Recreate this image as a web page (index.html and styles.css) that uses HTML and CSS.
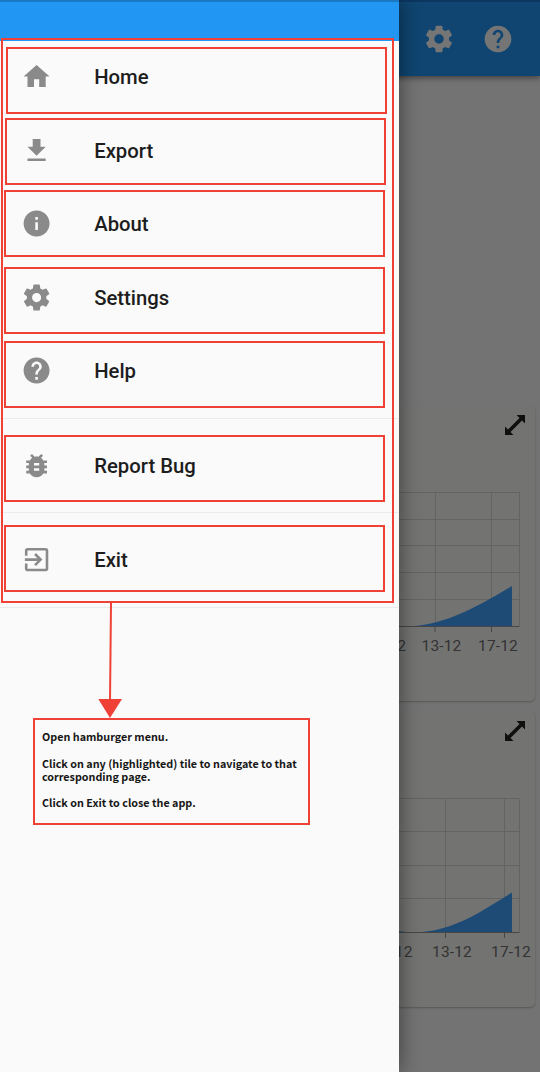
FILE: index.html
```
<!DOCTYPE html>
<html lang="en">
<head>
<meta charset="utf-8">
<title>Navigation drawer</title>
<link rel="stylesheet" href="styles.css">
</head>
<body>
<svg class="defs" width="0" height="0">
  <symbol id="home" viewBox="0 0 24 24"><path d="M10 20v-6h4v6h5v-8h3L12 3 2 12h3v8z"/></symbol>
  <symbol id="download" viewBox="0 0 24 24"><path d="M19 9h-4V3H9v6H5l7 7 7-7zM5 18v2h14v-2H5z"/></symbol>
  <symbol id="info" viewBox="0 0 24 24"><path d="M12 2C6.48 2 2 6.48 2 12s4.480 10 10 10 10-4.480 10-10S17.520 2 12 2zm1 15h-2v-6h2v6zm0-8h-2V7h2v2z"/></symbol>
  <symbol id="gear" viewBox="0 0 24 24"><path d="M19.430 12.980c.04-.32.07-.64.07-.98s-.03-.66-.07-.98l2.110-1.650c.19-.15.24-.42.12-.64l-2-3.460c-.12-.22-.39-.3-.61-.22l-2.490 1c-.52-.4-1.080-.73-1.690-.98l-.38-2.650C14.460 2.180 14.250 2 14 2h-4c-.25 0-.46.18-.49.42l-.38 2.650c-.61.25-1.170.59-1.690.98l-2.490-1c-.23-.09-.49 0-.61.22l-2 3.460c-.13.22-.07.49.12.64l2.110 1.650c-.04.32-.07.65-.07.98s.03.66.07.98l-2.110 1.650c-.19.15-.24.42-.12.64l2 3.460c.12.22.39.3.61.22l2.490-1c.52.4 1.080.73 1.690.98l.38 2.650c.03.24.24.42.49.42h4c.25 0 .46-.18.49-.42l.38-2.650c.61-.25 1.170-.59 1.690-.98l2.490 1c.23.09.49 0 .61-.22l2-3.460c.12-.22.07-.49-.12-.64l-2.110-1.650zM12 15.500c-1.930 0-3.500-1.570-3.500-3.500s1.570-3.500 3.500-3.500 3.500 1.570 3.500 3.500-1.570 3.500-3.500 3.500z"/></symbol>
  <symbol id="help" viewBox="0 0 24 24"><path d="M12 2C6.480 2 2 6.480 2 12s4.480 10 10 10 10-4.480 10-10S17.520 2 12 2zm1 17h-2v-2h2v2zm2.070-7.750l-.9.920C13.450 12.900 13 13.500 13 15h-2v-.5c0-1.100.45-2.100 1.170-2.830l1.240-1.260c.37-.36.59-.86.59-1.410 0-1.100-.9-2-2-2s-2 .9-2 2H8c0-2.210 1.790-4 4-4s4 1.790 4 4c0 .88-.36 1.680-.93 2.250z"/></symbol>
  <symbol id="bug" viewBox="0 0 24 24"><path d="M20 8h-2.810c-.45-.78-1.070-1.450-1.820-1.960L17 4.410 15.590 3l-2.170 2.170C12.960 5.060 12.490 5 12 5s-.96.06-1.410.17L8.410 3 7 4.410l1.620 1.630C7.880 6.550 7.260 7.220 6.810 8H4v2h2.090c-.05.33-.09.66-.09 1v1H4v2h2v1c0 .34.04.67.09 1H4v2h2.810c1.040 1.790 2.970 3 5.190 3s4.150-1.210 5.190-3H20v-2h-2.090c.05-.33.09-.66.09-1v-1h2v-2h-2v-1c0-.34-.04-.67-.09-1H20V8zm-6 8h-4v-2h4v2zm0-4h-4v-2h4v2z"/></symbol>
  <symbol id="exit" viewBox="0 0 24 24"><path d="M10.090 15.590L11.500 17l5-5-5-5-1.410 1.410L12.670 11H3v2h9.670l-2.580 2.590zM19 3H5c-1.110 0-2 .9-2 2v4h2V5h14v14H5v-4H3v4c0 1.100.89 2 2 2h14c1.100 0 2-.9 2-2V5c0-1.100-.9-2-2-2z"/></symbol>
  <symbol id="expand" viewBox="0 0 20 20"><path d="M11.500 0H20v8.500l-3-3L5.500 17l3 3H0v-8.500l3 3L14.500 3z"/></symbol>
</svg>

<div class="screen">
  <div class="page">
    <header class="appbar">
      <svg class="bar-icon"><use href="#gear"/></svg>
      <svg class="bar-icon"><use href="#help"/></svg>
    </header>
    <main class="cards">
      <section class="card">
        <svg class="expand"><use href="#expand"/></svg>
        <svg class="chart" viewBox="380 490 155 170">
          <path class="grid" d="M380 492.500H519.500M380 519.500H519.500M380 545.500H519.500M380 572.500H519.500M380 599.500H519.500M435.500 492V626M491.500 492V626M519.500 492V626"/>
          <path class="area" d="M415 626C449 622 473 609 512 586V626Z"/>
          <path class="axis" d="M380 626.500H519.500M435 626V632M491.500 626V632"/>
          <text x="390.500" y="651" text-anchor="middle">9-12</text>
          <text x="441.500" y="651" text-anchor="middle">13-12</text>
          <text x="498" y="651" text-anchor="middle">17-12</text>
        </svg>
      </section>
      <section class="card">
        <svg class="expand"><use href="#expand"/></svg>
        <svg class="chart" viewBox="380 796 155 170">
          <path class="grid" d="M380 798.500H519.500M380 831.500H519.500M380 865.500H519.500M380 898.500H519.500M445.500 799V932M504.500 799V932M519.500 799V932"/>
          <path class="area" d="M422 932C454 929 476 915 512 892.500V932ZM380 929L407 932H380Z"/>
          <path class="axis" d="M380 932.500H519.500M445.500 932V938M504.500 932V938"/>
          <text x="397" y="957" text-anchor="middle">9-12</text>
          <text x="452" y="957" text-anchor="middle">13-12</text>
          <text x="511" y="957" text-anchor="middle">17-12</text>
        </svg>
      </section>
    </main>
  </div>
  <div class="scrim"></div>

  <nav class="drawer">
    <div class="drawer-head"></div>
    <a class="tile"><svg><use href="#home"/></svg><span>Home</span></a>
    <a class="tile"><svg><use href="#download"/></svg><span>Export</span></a>
    <a class="tile"><svg><use href="#info"/></svg><span>About</span></a>
    <a class="tile"><svg><use href="#gear"/></svg><span>Settings</span></a>
    <a class="tile"><svg><use href="#help"/></svg><span>Help</span></a>
    <div class="divider"></div>
    <a class="tile"><svg><use href="#bug"/></svg><span>Report Bug</span></a>
    <div class="divider"></div>
    <a class="tile"><svg><use href="#exit"/></svg><span>Exit</span></a>
    <div class="divider"></div>
  </nav>

  <!-- Annotation marks over the drawer -->
  <div class="mark mark-all"></div>
  <div class="mark mark-home"></div>
  <div class="mark mark-export"></div>
  <div class="mark mark-about"></div>
  <div class="mark mark-settings"></div>
  <div class="mark mark-help"></div>
  <div class="mark mark-bug"></div>
  <div class="mark mark-exit"></div>
  <svg class="arrow" viewBox="0 0 24 116"><path d="M12 0h2l-1 98h-2z"/><path d="M.3 96h23.700L12 115z"/></svg>
  <div class="mark note">
    <p>Open hamburger menu.</p>
    <p>Click on any (highlighted) tile to navigate to that<br>corresponding page.</p>
    <p>Click on Exit to close the app.</p>
  </div>
</div>
</body>
</html>
```
FILE: styles.css
```
* { box-sizing: border-box; }
body { margin: 0; font-family: Roboto, sans-serif; }
.defs { position: absolute; }
.screen {
  position: relative;
  width: 540px;
  height: 1072px;
  overflow: hidden;
  background: #fafafa;
}

/* Page behind the drawer */
.page { display: flex; flex-direction: column; height: 100%; }
.appbar {
  display: flex;
  justify-content: flex-end;
  align-items: center;
  gap: 27px;
  height: 76px;
  padding-right: 26px;
  background: #2196f3;
  border-top: 2px solid #1976d2;
  box-shadow: 0 2px 6px rgba(0, 0, 0, .45);
}
.bar-icon { width: 32px; height: 32px; fill: #fff; }
.cards {
  display: flex;
  flex-direction: column;
  gap: 10px;
  padding: 329px 5px 0 8px;
}
.card {
  display: flex;
  flex-direction: column;
  align-items: flex-end;
  height: 296px;
  padding-top: 10px;
  border-radius: 5px;
  background: #fbfbf9;
  box-shadow: 0 1px 2px rgba(0, 0, 0, .25);
}
.expand { width: 20px; height: 20px; margin-right: 10px; fill: #222; }
.chart { width: 155px; height: 170px; margin-top: 55px; overflow: visible; }
.grid { fill: none; stroke: #d8d8d8; }
.axis { fill: none; stroke: #999; }
.area { fill: #43a3ff; }
.chart text { font-size: 15.5px; fill: #707070; letter-spacing: .15px; }
.scrim { position: absolute; inset: 0; background: rgba(0, 0, 0, .54); }

/* Drawer */
.drawer {
  position: absolute;
  top: 0;
  left: 0;
  width: 399px;
  height: 100%;
  background: #fafafa;
  box-shadow: 2px 0 18px rgba(0, 0, 0, .4);
}
.drawer-head {
  height: 41px;
  margin-bottom: -.7px;
  background: #2196f3;
  border-top: 2px solid #1b78c2;
}
.tile {
  display: flex;
  align-items: center;
  gap: 42.500px;
  height: 73.500px;
  padding-left: 20.500px;
}
.tile svg { width: 31.200px; height: 31.200px; fill: #8a8a8a; }
.tile span { font-size: 20.300px; font-weight: 500; color: #1d1d1d; }
.divider { display: flex; align-items: center; height: 21px; }
.divider::before { content: ""; flex: 1; height: 1px; background: #ebebeb; }

/* Annotations */
.mark { position: absolute; width: 381px; height: 67px; border: 2px solid #f04137; }
.mark-all { left: 1px; top: 38px; width: 393px; height: 565px; }
.mark-home { left: 6px; top: 47px; }
.mark-export { left: 5px; top: 118px; }
.mark-about { left: 4px; top: 190px; }
.mark-settings { left: 4px; top: 267px; }
.mark-help { left: 4px; top: 341px; }
.mark-bug { left: 4px; top: 435px; }
.mark-exit { left: 4px; top: 525px; }
.arrow { position: absolute; left: 98px; top: 603px; width: 24px; height: 116px; fill: #f04137; }
.note {
  left: 33px;
  top: 718px;
  width: 277px;
  height: 107px;
  padding: 10px 0 0 7px;
  font: 700 10.750px/13.300px "Noto Sans CJK SC", sans-serif;
  color: #161616;
  white-space: nowrap;
}
.note p { margin: 0 0 13.300px; }
```
